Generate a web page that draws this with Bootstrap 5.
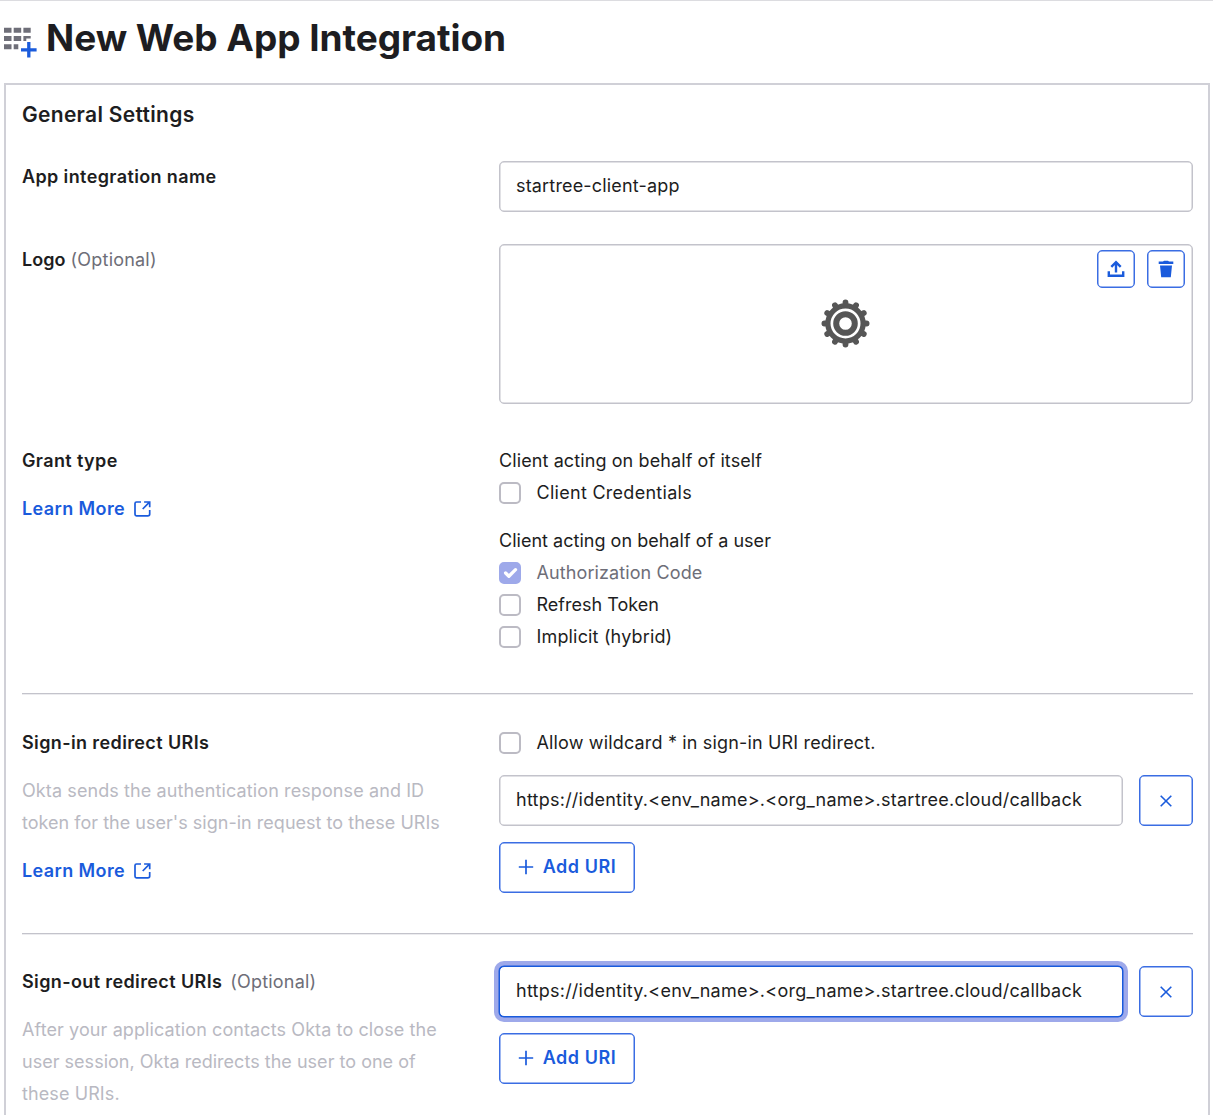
<!DOCTYPE html>
<html lang="en">
<head>
<meta charset="utf-8">
<meta name="viewport" content="width=device-width, initial-scale=1">
<title>New Web App Integration</title>
<link href="https://cdn.jsdelivr.net/npm/bootstrap@5.3.0/dist/css/bootstrap.min.css" rel="stylesheet">
<style>
  :root { --ink:#1d1d21; --soft:#6e6e78; --faint:#b9b9c2; --line:#c3c3cb; --rule:#d0d0d7; --brand:#1a5bdc; }
  html, body { height:1117px; overflow:hidden; }
  body { font-family:Inter, "Liberation Sans", sans-serif; font-size:18px; line-height:32px; letter-spacing:.1px; color:var(--ink); background:#fff; border-top:1px solid #dcdce0; }
  .page-head { height:82px; padding:0 0 8px 4px; }
  .page-title { font-size:37px; font-weight:700; line-height:44px; letter-spacing:-.04px; margin:0 0 0 9px; }
  .panel { margin:0 3px 0 4px; height:1032px; border:2px solid var(--rule); border-bottom:0; padding:0 15px 0 16px; overflow:hidden; }
  .panel-title { font-size:21px; font-weight:600; line-height:32px; letter-spacing:.3px; padding-top:14px; }
  .name-row { margin-top:30px; }
  .logo-row { margin-top:32px; }
  .grant-row { margin-top:41px; }
  .label-col { width:477px; flex:none; }
  .field-label { font-weight:600; letter-spacing:.38px; }
  .optional { color:var(--soft); letter-spacing:.2px; }
  .hint { color:var(--faint); width:440px; }
  .more-link { color:var(--brand); font-weight:600; letter-spacing:.4px; text-decoration:none; gap:8px; }
  .form-control.field { height:51px; font-size:18px; letter-spacing:.17px; color:var(--ink); border:1px solid var(--line); box-shadow:inset 0 0 0 .5px var(--line); border-radius:5px; padding:0 16px 2px; }
  .form-control.field.uri { letter-spacing:.24px; }
  .form-control.field.active-field { border-color:var(--brand); box-shadow:0 0 0 .5px var(--brand), 0 0 0 5px #9ea9ea; }
  .logo-box { height:160px; border:1px solid var(--line); box-shadow:inset 0 0 0 .5px var(--line); border-radius:5px; }
  .logo-tools { gap:12px; padding:5px 7px 0 0; }
  .btn.outline { --bs-btn-color:var(--brand); --bs-btn-border-color:#3a6de3; border-width:1px; box-shadow:inset 0 0 0 .5px #3a6de3; border-radius:5px; padding:0; font-size:18px; font-weight:600; letter-spacing:.55px; display:flex; align-items:center; justify-content:center; flex:none; }
  .sq { width:38px; height:38px; }
  .del { width:54px; height:51px; }
  .btn.add { width:136px; height:51px; gap:9px; padding-bottom:2px; }
  .form-check.option { display:flex; align-items:center; min-height:32px; margin:0; padding:0; gap:15.5px; }
  .form-check.option .form-check-input { width:22px; height:22px; margin:-1px 0 0; float:none; border:2px solid #bcbbc4; border-radius:5px; flex:none; }
  .form-check.option .form-check-input:checked { background-color:#9ea9ea; border-color:#9ea9ea; opacity:1; background-size:22px; }
  .form-check.option .form-check-input:disabled ~ .form-check-label { opacity:1; color:var(--soft); }
  .ls-2 { letter-spacing:.16px; }
  .ls-3 { letter-spacing:.28px; }
  .ls-0 { letter-spacing:.02px; }
  .split { border-top:1px solid var(--line); box-shadow:inset 0 1px 0 #ececef; margin-top:40px; padding-top:32px; }
  .split.first { padding-top:33px; }
  svg { flex:none; display:block; }
</style>
<script src="https://cdn.jsdelivr.net/npm/bootstrap@5.3.0/dist/js/bootstrap.bundle.min.js"></script>
</head>
<body>
<svg class="d-none">
  <symbol id="external" viewBox="0 0 18 18"><g fill="none" stroke="currentColor" stroke-width="1.7"><path d="M7.5 2H3Q1.5 2 1.5 3.5V14.3Q1.5 15.8 3 15.8H14.3Q16.2 15.8 16.2 14.3V10M10.6 2H16.2V7.2M16 2.2L9.2 9"/></g></symbol>
  <symbol id="cross" viewBox="0 0 12 12"><path d="M.7.7L11.3 11.3M11.3.7L.7 11.3" stroke="currentColor" stroke-width="1.6"/></symbol>
  <symbol id="plus" viewBox="0 0 16 16"><path d="M8 .8V15.2M.8 8H15.2" stroke="currentColor" stroke-width="1.7"/></symbol>
</svg>

<header class="page-head d-flex align-items-center">
  <svg width="33" height="32" viewBox="0 0 33 32" class="mt-2">
    <path fill="#6e6e78" d="M0 1.7h7.5v5H0zM9.7 1.7h7.5v5H9.7zM19.4 1.7h7.3v5h-7.3zM0 10h7.5v5H0zM9.7 10h7.5v5H9.7zM19.4 10h7.3v2.6h-4.4v2.4h-2.9zM0 18.3h7.5v5H0zM9.7 18.3h4.6v5H9.7z"/>
    <path d="M24.8 16V31.6M17 23.8H32.6" stroke="#1a5bdc" stroke-width="3.3"/>
  </svg>
  <h1 class="page-title">New Web App Integration</h1>
</header>

<main class="panel">
  <h2 class="panel-title m-0">General Settings</h2>

  <div class="name-row d-flex">
    <div class="label-col field-label">App integration name</div>
    <div class="flex-grow-1"><input class="form-control field" value="startree-client-app" aria-label="App integration name"></div>
  </div>

  <div class="logo-row d-flex">
    <div class="label-col"><span class="field-label ls-0">Logo</span> <span class="optional">(Optional)</span></div>
    <div class="logo-box flex-grow-1 position-relative d-flex align-items-center justify-content-center">
      <svg width="50" height="50" viewBox="-24.5 -24.5 50 50" fill="none" stroke="#565656">
        <circle r="17.6" stroke-width="5.2"/>
        <circle r="9.3" stroke-width="6"/>
        <g stroke-width="5.8" stroke-linecap="round">
          <path id="teeth" d="M0-19V-21.1M0 19V21.1M-19 0H-21.1M19 0H21.1"/>
          <use href="#teeth" transform="rotate(30)"/>
          <use href="#teeth" transform="rotate(60)"/>
        </g>
      </svg>
      <div class="logo-tools position-absolute top-0 end-0 d-flex">
        <button class="btn outline sq" aria-label="Upload"><svg width="18" height="18" viewBox="0 0 18 18" fill="none" stroke="currentColor" stroke-width="2.4"><path d="M9 12.5V2.5M4.3 6.8L9 2.2L13.7 6.8M1.8 11.2V15.7H16.2V11.2"/></svg></button>
        <button class="btn outline sq" aria-label="Delete"><svg width="16" height="18" viewBox="0 0 16 18" fill="currentColor"><path d="M.7 1.6H5L6 .7H10L11 1.6H15.3V4H.7zM2 5.5H14L12.8 17.3H3.2z"/></svg></button>
      </div>
    </div>
  </div>

  <div class="grant-row d-flex">
    <div class="label-col">
      <div class="field-label">Grant type</div>
      <a href="#" class="more-link d-flex align-items-center mt-3"><span>Learn More</span><svg width="19" height="18"><use href="#external"/></svg></a>
    </div>
    <div class="flex-grow-1">
      <div>Client acting on behalf of itself</div>
      <div class="form-check option"><input class="form-check-input" type="checkbox" id="cc"><label class="form-check-label ls-3" for="cc">Client Credentials</label></div>
      <div class="mt-3 ls-0">Client acting on behalf of a user</div>
      <div class="form-check option"><input class="form-check-input" type="checkbox" id="ac" checked disabled><label class="form-check-label" for="ac">Authorization Code</label></div>
      <div class="form-check option"><input class="form-check-input" type="checkbox" id="rt"><label class="form-check-label ls-0" for="rt">Refresh Token</label></div>
      <div class="form-check option"><input class="form-check-input" type="checkbox" id="ih"><label class="form-check-label ls-2" for="ih">Implicit (hybrid)</label></div>
    </div>
  </div>

  <div class="split first d-flex">
    <div class="label-col">
      <div class="field-label">Sign-in redirect URIs</div>
      <div class="hint mt-3"><span>Okta sends the authentication response and ID</span><br><span class="ls-0">token for the user's sign-in request to these URIs</span></div>
      <a href="#" class="more-link d-flex align-items-center mt-3"><span>Learn More</span><svg width="19" height="18"><use href="#external"/></svg></a>
    </div>
    <div class="flex-grow-1">
      <div class="form-check option"><input class="form-check-input" type="checkbox" id="wc"><label class="form-check-label ls-2" for="wc">Allow wildcard * in sign-in URI redirect.</label></div>
      <div class="d-flex gap-3 mt-3"><input class="form-control field uri" aria-label="Sign-in redirect URI" value="https://identity.&lt;env_name&gt;.&lt;org_name&gt;.startree.cloud/callback"><button class="btn outline del" aria-label="Remove"><svg width="12" height="12"><use href="#cross"/></svg></button></div>
      <button class="btn outline add mt-3"><svg width="16" height="16"><use href="#plus"/></svg><span>Add URI</span></button>
    </div>
  </div>

  <div class="split d-flex">
    <div class="label-col">
      <div><span class="field-label me-1">Sign-out redirect URIs</span><span class="optional ms-1">(Optional)</span></div>
      <div class="hint mt-3">After your application contacts Okta to close the<br><span class="ls-0">user session, Okta redirects the user to one of</span><br>these URIs.</div>
    </div>
    <div class="flex-grow-1">
      <div class="d-flex gap-3"><input class="form-control field uri active-field" aria-label="Sign-out redirect URI" value="https://identity.&lt;env_name&gt;.&lt;org_name&gt;.startree.cloud/callback"><button class="btn outline del" aria-label="Remove"><svg width="12" height="12"><use href="#cross"/></svg></button></div>
      <button class="btn outline add mt-3"><svg width="16" height="16"><use href="#plus"/></svg><span>Add URI</span></button>
    </div>
  </div>
</main>
</body>
</html>
